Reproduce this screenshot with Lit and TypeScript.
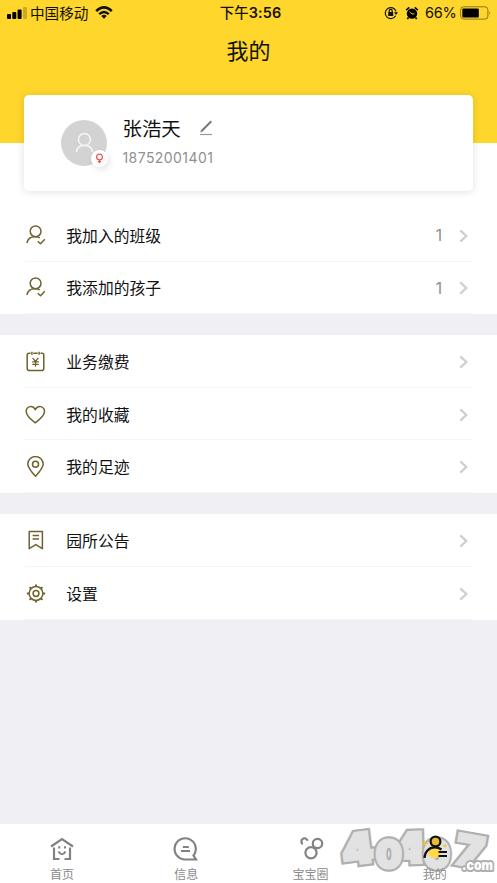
import { LitElement, html, css, svg } from "lit";
import { customElement, property } from "lit/decorators.js";

const icons: Record<string, unknown> = {
  person: svg`<circle cx="10.600" cy="6.300" r="5.400"/><path d="M2 18C2.600 13.800 5.500 11.600 10.400 11.800c1.900 0 3.200.3 4.400 1M12.800 16.200l2.700 2.500 4.300-4.500"/>`,
  fee: svg`<path d="M5.500 2.200H4Q2.200 2.200 2.200 4V17.200Q2.200 19.600 4.500 19.600H16.500Q18.800 19.600 18.800 17.200V4Q18.800 2.200 17 2.200H15.500M8.300 2.200h4.400M6.900.8v2.900M14.100.8v2.900"/><path stroke-width="1.250" d="M7.600 6.900l2.900 3.600 2.900-3.600M10.500 10.500v5.300M7.200 10.900h6.600M7.200 13.300h6.600"/>`,
  heart: svg`<path d="M10.300 18.800C5 15 1.200 11.700 1.200 7.600c0-5.600 6.700-7 9.100-2 2.400-5 9.200-3.600 9.200 2 0 4.100-3.900 7.400-9.200 11.200Z"/>`,
  pin: svg`<path d="M10.500 20.300C6 15.500 2.800 11.900 2.800 8.100a7.700 7.500 0 0 1 15.400 0c0 3.800-3.200 7.400-7.700 12.200Z"/><circle cx="10.500" cy="8.200" r="3"/>`,
  notice: svg`<path d="M4.200 1.500h13.200v17.200l-6.600-4.100L4.200 18.700ZM7.600 5.500h6.400M7.600 9h6.400"/>`,
  gear: svg`<circle cx="11" cy="10.500" r="6.900"/><circle cx="11" cy="10.500" r="2.900"/><path stroke-width="2" d="M11 3.600V1.400M11 17.400v2.200M4.100 10.500H1.900M17.900 10.500h2.200M6.100 5.600L4.600 4.100M15.900 15.400l1.500 1.500M6.100 15.400l-1.500 1.500M15.900 5.600l1.500-1.500"/>`,
};

@customElement("menu-row")
class MenuRow extends LitElement {
  @property() icon = "";
  @property() label = "";
  @property() count = "";
  static styles = css`
    :host { display: flex; align-items: center; flex: 1; margin: 0 25px; border-bottom: 1px solid #f5f5f5; box-sizing: border-box; }
    .icon { width: 21px; height: 21px; margin-top: 1px; fill: none; stroke: #6f622d; stroke-width: 1.5; stroke-linejoin: round; }
    .label { flex: 1; margin-left: 20.3px; padding-top: 2px; font-size: 15.8px; line-height: 22px; color: #111; }
    .count { font: 15.5px Inter, sans-serif; color: #8c8c8c; margin: 2px 17px 0 0; }
    .arrow { width: 9px; height: 14px; margin: 2px 4px 0 0; fill: none; stroke: #cfcfcf; stroke-width: 2.3; }
  `;
  render() {
    return html`<svg class="icon" viewBox="0 0 21 21">${icons[this.icon]}</svg>
      <span class="label">${this.label}</span>
      <span class="count">${this.count}</span>
      <svg class="arrow" viewBox="0 0 9 14"><path d="M1.300 1.300L7.300 7l-6 5.700"/></svg>`;
  }
}

@customElement("app-root")
class AppRoot extends LitElement {
  static styles = css`
    :host { display: flex; flex-direction: column; position: relative; height: 883px; width: 497px; overflow: hidden; background: #efeff4; font-family: "Noto Sans CJK SC", sans-serif; color: #111; }
    * { box-sizing: border-box; }
    .header { height: 143px; background: #ffd62b; flex: none; }
    .status { height: 26px; display: grid; grid-template-columns: 1fr auto 1fr; align-items: center; font-size: 14.6px; line-height: 26px; color: #151100; padding: 0 6px 0 7px; }
    .left, .right { display: flex; align-items: center; }
    .right { justify-content: flex-end; }
    .signal { width: 20px; height: 12px; margin-right: 3px; }
    .wifi { width: 18px; height: 13px; margin-left: 7px; margin-top: -2px; }
    .time { font-family: Inter, "Noto Sans CJK SC", sans-serif; font-size: 14.4px; font-weight: 600; padding-left: 3px; letter-spacing: .1px; }
    .time-prefix { font-weight: 500; }
    .lock { width: 14px; height: 14px; margin-right: 7px; margin-top: -1px; }
    .alarm { width: 14px; height: 14px; margin-right: 6px; margin-top: -1px; }
    .percent { font-family: Inter, sans-serif; font-size: 14.500px; width: 35px; letter-spacing: -.2px; }
    .battery { width: 31px; height: 14px; }
    .title { font-size: 22px; line-height: 32px; margin-top: 7px; text-align: center; }
    .body { background: #fff; height: 171px; flex: none; display: flex; flex-direction: column; }
    .card { height: 96px; margin: -48px 24px 18px; flex: none; background: #fff; border-radius: 5px; box-shadow: 0 1px 8px rgba(0,0,0,.12); display: flex; align-items: center; padding-left: 37px; }
    .avatar { position: relative; width: 46px; height: 46px; border-radius: 50%; background: #d3d3d3; }
    .face { width: 46px; height: 46px; display: block; fill: none; stroke: #f6f6f6; stroke-width: 1.5; }
    .gender { position: absolute; left: 30px; top: 30px; width: 17px; height: 17px; border-radius: 50%; background: #fff; box-shadow: 2px 3px 6px rgba(0,0,0,.1); }
    .gender svg { width: 17px; height: 17px; display: block; fill: none; stroke: #ef5350; stroke-width: 1.2; }
    .who { margin-left: 15.5px; }
    .name-line { display: flex; align-items: center; height: 26px; font-size: 19.400px; line-height: 26px; }
    .pencil { width: 14px; height: 16px; margin-left: 18px; }
    .phone { font-family: Inter, sans-serif; font-size: 14px; line-height: 20px; color: #909090; margin-top: 7px; letter-spacing: .43px; height: 23px; }
    .group { background: #fff; display: flex; flex-direction: column; flex: none; }
    .first { height: 105px; }
    .three { height: 158px; margin-top: 21px; }
    .two { height: 106px; margin-top: 21px; }
    .tabs { margin-top: auto; height: 59px; background: #fff; display: grid; grid-template-columns: repeat(4, 1fr); flex: none; }
    .tab { display: flex; flex-direction: column; align-items: center; font-size: 12px; line-height: 16px; color: #8a8a8a; padding-top: 11px; }
    .tab svg { width: 28px; height: 28px; fill: none; stroke: #828282; stroke-width: 2.2; margin-bottom: 3px; }
    .tab.active { position: relative; z-index: 2; }
    .watermark { position: absolute; left: 333px; top: 822px; width: 164px; height: 61px; z-index: 1; font-family: Inter, sans-serif; font-weight: 900; }
    .edge { stroke: #b0b0b0; stroke-width: 8px; stroke-miterlimit: 2; }
    .fill { fill: #e2e2e2; stroke: #e2e2e2; stroke-width: 3.5px; stroke-miterlimit: 2; }
    .domain { fill: #fff; stroke: #b0b0b0; stroke-width: 4px; paint-order: stroke; stroke-linejoin: round; }
  `;
  render() {
    const digit = (char: string, transform: string) => svg`<g transform=${transform}>
      <text class="edge">${char}</text><text class="fill" aria-hidden="true">${char}</text></g>`;
    return html`
      <div class="header">
        <div class="status">
          <div class="left">
            <svg class="signal" viewBox="0 0 20 12"><rect x="0" y="7" width="4" height="5" rx="1"/><rect x="5.300" y="5" width="4" height="7" rx="1"/><rect x="10.600" y="2.500" width="4" height="9.500" rx="1"/><rect x="16" y="0" width="4" height="12" rx="1" opacity=".2"/></svg>
            <span>中国移动</span>
            <svg class="wifi" viewBox="0 0 18 13" fill="none" stroke="#111" stroke-width="2.500"><path d="M1.200 5.100Q9-2.300 16.800 5.100M4.200 8.200Q9 3.800 13.800 8.200"/><path d="M6.300 10Q9 7.700 11.700 10L9 12.700Z" fill="#111" stroke="none"/></svg>
          </div>
          <div class="time"><span class="time-prefix">下午</span>3:56</div>
          <div class="right">
            <svg class="lock" viewBox="0 0 14 14" fill="none" stroke="#111" stroke-width="1.200"><path d="M11.600 9.700A5.500 5.500 0 1 1 12 5.400"/><path d="M10 6.200h4l-2 2.700Z" fill="#111" stroke="none"/><rect x="4.200" y="6" width="5" height="4" fill="#111" stroke="none"/><path d="M5.200 6V4.900a1.500 1.500 0 0 1 3 0V6"/></svg>
            <svg class="alarm" viewBox="0 0 14 14"><circle cx="7" cy="7.600" r="5.200"/><path d="M1.200 4.100L4.300 1.400M12.800 4.100L9.700 1.400M3.500 11.500L2.300 13M10.500 11.500l1.200 1.500" stroke="#111" stroke-width="1.800"/><path d="M4.500 5.800L7 8l2.600-.2" fill="none" stroke="#ffd62b" stroke-width=".9"/></svg>
            <span class="percent">66%</span>
            <svg class="battery" viewBox="0 0 31 14"><rect x=".6" y=".8" width="27.300" height="12.300" rx="3" fill="none" stroke="#8b771f"/><rect x="2.300" y="2.500" width="16.500" height="9" rx="1"/><path d="M29.300 5q1.700 2 0 4Z" fill="#8b771f"/></svg>
          </div>
        </div>
        <div class="title">我的</div>
      </div>
      <div class="body">
        <div class="card">
          <div class="avatar">
            <svg class="face" viewBox="0 0 46 46"><circle cx="23.500" cy="19.500" r="6"/><path d="M15.500 32c.3-4.500 3.200-6.600 8-6.600s7.700 2.100 8 6.600"/></svg>
            <div class="gender"><svg viewBox="0 0 17 17"><circle cx="8.500" cy="7" r="2.900"/><path d="M8.500 9.900v3.300M6.900 11.600h3.200"/></svg></div>
          </div>
          <div class="who">
            <div class="name-line">张浩天<svg class="pencil" viewBox="0 0 14 16"><path d="M2.600 11L12.300 1.300" stroke="#777" stroke-width="2"/><path d="M1.300 12.500l.6-2 1.600 1.300Z" fill="#777"/><path d="M1 14.500h12" stroke="#999" stroke-width="1.200"/></svg></div>
            <div class="phone">18752001401</div>
          </div>
        </div>
        <div class="group first">
          <menu-row icon="person" label="我加入的班级" count="1"></menu-row>
          <menu-row icon="person" label="我添加的孩子" count="1"></menu-row>
        </div>
      </div>
      <div class="group three">
        <menu-row icon="fee" label="业务缴费"></menu-row>
        <menu-row icon="heart" label="我的收藏"></menu-row>
        <menu-row icon="pin" label="我的足迹"></menu-row>
      </div>
      <div class="group two">
        <menu-row icon="notice" label="园所公告"></menu-row>
        <menu-row icon="gear" label="设置"></menu-row>
      </div>
      <div class="tabs">
        <div class="tab"><svg viewBox="0 0 28 28"><path d="M3 11.500L14 4l11 7.500M6 12.500v11.500h5.500M16.500 24H22V12.500M10.500 16.500q3.500 5.500 7 0"/><path d="M10.200 12.300h2M16 12.300h2"/></svg>首页</div>
        <div class="tab"><svg viewBox="0 0 28 28"><path d="M21.500 20.500A10.600 10.600 0 1 0 13 24.500H24ZM10.800 12h6M9 16h9"/></svg>信息</div>
        <div class="tab"><svg viewBox="0 0 28 28"><path d="M5.800 9A3.100 3.100 0 1 1 10.500 5.800"/><circle cx="20.500" cy="8.500" r="4.700"/><circle cx="14" cy="17.700" r="5.600"/></svg>宝宝圈</div>
        <div class="tab active"><svg viewBox="0 0 28 28"><circle cx="13.500" cy="16.500" r="6.800" fill="#ffd94a" stroke="none"/><circle cx="14.500" cy="6.500" r="4.900" fill="#e6bd35" stroke="#111"/><path d="M3.500 23C3.500 17 8 12.300 13.500 12.300c3 0 5 .7 7 2.200M17.500 17H26M17.500 21H26" stroke="#111"/><path d="M4 5l1 2.500L7.500 8.500 5 9.500 4 12 3 9.500.5 8.500 3 7.500ZM24 8.500l.7 1.600 1.600.7-1.600.7-.7 1.600-.7-1.600-1.600-.7 1.600-.7Z" fill="#f1c52e" stroke="none"/></svg>我的</div>
      </div>
      <svg class="watermark" viewBox="0 0 164 61" font-size="41">
        ${digit("4", "translate(11 43) rotate(-7) scale(1.08 1)")}
        ${digit("4", "translate(62 41) rotate(-2) scale(1.08 1)")}
        ${digit("0", "translate(43 46) scale(.88 .92)")}
        ${digit("0", "translate(91 46) scale(.88 .92)")}
        ${digit("7", "translate(121 41) rotate(10) scale(1.1 1)")}
        <text class="domain" x="129" y="48" font-size="14" textLength="31" lengthAdjust="spacingAndGlyphs">.com</text>
      </svg>
    `;
  }
}
